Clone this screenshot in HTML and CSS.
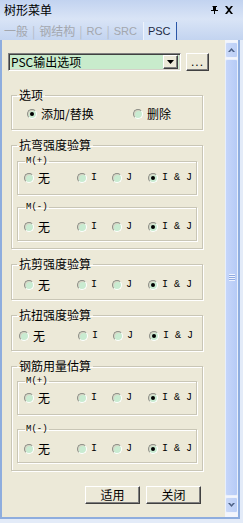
FILE: index.html
```html
<html lang="zh">
<head>
    <meta charset="UTF-8">
    <title>树形菜单</title>
    <link rel="stylesheet" href="styles.css">
</head>
<body>
<div class="window">
    <div class="titlebar">
        <span class="title">树形菜单</span>
        <div class="title-icons">
            <svg width="8" height="8" viewBox="0 0 8 8"><path d="M2 0h4v1h-1v3h2v1h-3v3h-1v-3h-3v-1h2v-3h-1z" fill="#000"/></svg>
            <svg width="8" height="8" viewBox="0 0 8 8"><path d="M0 0h2l2 2.5 2-2.5h2l-3 4 3 4h-2l-2-2.5-2 2.5h-2l3-4z" fill="#000"/></svg>
        </div>
    </div>

    <div class="tabs">
        <span class="tab">一般</span><span class="sep">|</span>
        <span class="tab">钢结构</span><span class="sep">|</span>
        <span class="tab latin">RC</span><span class="sep">|</span>
        <span class="tab latin">SRC</span>
        <span class="tab latin active">PSC</span>
    </div>

    <div class="frame">
        <div class="content">
            <div class="combo-row">
                <div class="combo">
                    <span>PSC输出选项</span>
                    <span class="drop"><svg width="7" height="4" viewBox="0 0 7 4"><path d="M0 0h7l-3.5 4z" fill="#000"/></svg></span>
                </div>
                <button class="btn more">...</button>
            </div>

            <fieldset class="group g-opts">
                <legend>选项</legend>
                <div class="opts opts-main">
                    <label class="opt"><span class="radio on"></span>添加/替换</label>
                    <label class="opt"><span class="radio"></span>删除</label>
                </div>
            </fieldset>

            <fieldset class="group g-outer">
                <legend>抗弯强度验算</legend>
                <fieldset class="sub sub-plus">
                    <legend class="mono-legend">M(+)</legend>
                    <div class="opts">
                        <label class="opt"><span class="radio"></span>无</label>
                        <label class="opt"><span class="radio"></span><span class="mono">I</span></label>
                        <label class="opt"><span class="radio"></span><span class="mono">J</span></label>
                        <label class="opt"><span class="radio on"></span><span class="mono">I &amp; J</span></label>
                    </div>
                </fieldset>
                <fieldset class="sub sub-minus">
                    <legend class="mono-legend">M(-)</legend>
                    <div class="opts">
                        <label class="opt"><span class="radio"></span>无</label>
                        <label class="opt"><span class="radio"></span><span class="mono">I</span></label>
                        <label class="opt"><span class="radio"></span><span class="mono">J</span></label>
                        <label class="opt"><span class="radio on"></span><span class="mono">I &amp; J</span></label>
                    </div>
                </fieldset>
            </fieldset>

            <fieldset class="group g-single">
                <legend>抗剪强度验算</legend>
                <div class="opts opts-shear">
                    <label class="opt"><span class="radio"></span>无</label>
                    <label class="opt"><span class="radio"></span><span class="mono">I</span></label>
                    <label class="opt"><span class="radio"></span><span class="mono">J</span></label>
                    <label class="opt"><span class="radio on"></span><span class="mono">I &amp; J</span></label>
                </div>
            </fieldset>

            <fieldset class="group g-single">
                <legend>抗扭强度验算</legend>
                <div class="opts opts-torsion">
                    <label class="opt"><span class="radio"></span>无</label>
                    <label class="opt"><span class="radio"></span><span class="mono">I</span></label>
                    <label class="opt"><span class="radio"></span><span class="mono">J</span></label>
                    <label class="opt"><span class="radio on"></span><span class="mono">I &amp; J</span></label>
                </div>
            </fieldset>

            <fieldset class="group g-outer g-rebar">
                <legend>钢筋用量估算</legend>
                <fieldset class="sub sub-plus">
                    <legend class="mono-legend">M(+)</legend>
                    <div class="opts">
                        <label class="opt"><span class="radio"></span>无</label>
                        <label class="opt"><span class="radio"></span><span class="mono">I</span></label>
                        <label class="opt"><span class="radio"></span><span class="mono">J</span></label>
                        <label class="opt"><span class="radio on"></span><span class="mono">I &amp; J</span></label>
                    </div>
                </fieldset>
                <fieldset class="sub sub-minus">
                    <legend class="mono-legend">M(-)</legend>
                    <div class="opts">
                        <label class="opt"><span class="radio"></span>无</label>
                        <label class="opt"><span class="radio"></span><span class="mono">I</span></label>
                        <label class="opt"><span class="radio"></span><span class="mono">J</span></label>
                        <label class="opt"><span class="radio on"></span><span class="mono">I &amp; J</span></label>
                    </div>
                </fieldset>
            </fieldset>

            <div class="actions">
                <button class="btn">适用</button>
                <button class="btn">关闭</button>
            </div>
        </div>

        <div class="scrollbar">
            <div class="sb-btn">
                <svg width="7" height="4" viewBox="0 0 7 4"><path d="M0 4l3.5-4 3.5 4h-2l-1.5-1.7-1.5 1.7z" fill="#4d6185"/></svg>
            </div>
            <div class="sb-thumb">
                <span class="grip"></span>
            </div>
            <div class="sb-btn">
                <svg width="7" height="4" viewBox="0 0 7 4"><path d="M0 0l3.5 4 3.5-4h-2l-1.5 1.7-1.5-1.7z" fill="#4d6185"/></svg>
            </div>
        </div>
    </div>
</div>
</body>
</html>
```

FILE: styles.css
```css
body {
    margin: 0;
    padding: 0;
    font-family: "Noto Sans CJK SC", sans-serif;
    font-size: 12px;
    color: #000;
    background: #e3ebf8;
}

.window {
    width: 243px;
    height: 523px;
    display: flex;
    flex-direction: column;
}

/* title bar */
.titlebar {
    height: 19px;
    display: flex;
    align-items: center;
    justify-content: space-between;
    padding: 0 10px 0 4px;
    background: linear-gradient(#c2d3f0, #d9e4f6);
}

.title {
    font-size: 12px;
    line-height: 14px;
}

.title-icons {
    display: flex;
    gap: 6px;
    align-items: center;
}

/* tabs */
.tabs {
    height: 21px;
    display: flex;
    align-items: flex-end;
    padding-left: 4px;
    background: linear-gradient(#d9e4f6, #c3d4f0);
    color: #a3a7ae;
    font-size: 12px;
}

.tabs .tab,
.tabs .sep {
    height: 18px;
    line-height: 18px;
}

.tabs .sep {
    margin: 0 4px;
    color: #b4bac4;
}

.tabs .latin {
    font-family: "Liberation Sans", sans-serif;
    font-size: 11px;
}

.tabs .active {
    margin-left: 6px;
    padding: 0 5px 0 4px;
    color: #1c2a44;
    background: #d6e4f8;
    border-left: 1px solid #eef3fc;
    border-right: 1px solid #2a56a8;
}

/* main frame */
.frame {
    flex: 1;
    display: flex;
    margin: 0 3px 4px 0;
    border: 2px solid #8eadde;
    border-top: 0;
    background: #ece9d8;
}

.content {
    flex: 1;
    padding: 13px 0 0 6px;
    box-sizing: border-box;
}

.combo-row {
    display: flex;
    gap: 5px;
    height: 18px;
}

.combo {
    width: 173px;
    box-sizing: border-box;
    display: flex;
    align-items: center;
    justify-content: space-between;
    background: #c8ebcc;
    border: 1px solid;
    border-color: #808080 #fff #fff #808080;
    box-shadow: inset 1px 1px #404040, inset -1px -1px #d4d0c8;
    padding: 0 2px;
}

.combo span:first-child {
    line-height: 14px;
}

.drop {
    width: 15px;
    height: 14px;
    box-sizing: border-box;
    display: flex;
    align-items: center;
    justify-content: center;
    background: #ece9d8;
    border: 1px solid;
    border-color: #fff #404040 #404040 #fff;
    box-shadow: inset -1px -1px #808080;
}

.btn {
    margin: 0;
    padding: 0;
    height: 18px;
    font-family: "Noto Sans CJK SC", sans-serif;
    font-size: 12px;
    line-height: 14px;
    color: #000;
    background: #ece9d8;
    border: 1px solid;
    border-color: #fff #404040 #404040 #fff;
    box-shadow: inset -1px -1px #808080;
}

.btn.more {
    width: 23px;
    font-family: "Liberation Sans", sans-serif;
    letter-spacing: 1px;
}

/* group boxes */
fieldset {
    margin: 0;
    min-width: 0;
    border: 1px solid #c9c6b6;
    box-shadow: inset 1px 1px #fff, 1px 1px #fff;
}

legend {
    padding: 0 2px;
    font-size: 12px;
    line-height: 14px;
}

.group {
    width: 192px;
    box-sizing: border-box;
    margin-left: 3px;
    margin-top: 8px;
    padding: 0 5px;
}

.g-opts {
    margin-top: 17px;
    padding: 4px 5px 7px;
}

.g-outer {
    padding: 2px 5px 7px;
}

.g-rebar {
    padding-top: 1px;
}

.g-single {
    padding: 6px 5px 6px;
}

.sub {
    padding: 2px 6px 8px;
}

.sub-minus {
    margin-top: 5px;
    padding: 5px 6px 5px;
}

.g-rebar .sub-minus {
    margin-top: 7px;
}

.mono-legend {
    font-family: "Liberation Mono", monospace;
    font-size: 9px;
    padding: 0 1px;
    margin-left: 1px;
}

/* radio rows */
.opts {
    display: grid;
    grid-template-columns: 53px 35px 36px auto;
    height: 16px;
    align-items: center;
    white-space: nowrap;
}

.opts-main {
    grid-template-columns: 106px auto;
    padding-left: 10px;
}

.opts-shear {
    padding-left: 7px;
}

.opts-torsion {
    grid-template-columns: 59px 35px 36px auto;
    padding-left: 2px;
}

.opt {
    display: flex;
    align-items: center;
    gap: 4px;
    line-height: 14px;
}

.mono {
    font-family: "Liberation Mono", monospace;
    font-size: 10px;
}

.radio {
    flex: none;
    width: 10px;
    height: 10px;
    box-sizing: border-box;
    border-radius: 50%;
    background: #c9ebd1;
    border: 1px solid;
    border-color: #8d8d86 #fff #fff #8d8d86;
    box-shadow: inset 1px 1px #d8d5c6;
    display: flex;
    align-items: center;
    justify-content: center;
}

.radio.on::after {
    content: "";
    width: 4px;
    height: 4px;
    border-radius: 50%;
    background: #000;
}

/* bottom buttons */
.actions {
    width: 192px;
    margin: 15px 0 0 3px;
    padding-right: 2px;
    box-sizing: border-box;
    display: flex;
    justify-content: flex-end;
    gap: 6px;
}

.actions .btn {
    width: 55px;
}

/* scrollbar */
.scrollbar {
    width: 13px;
    display: flex;
    flex-direction: column;
    padding: 2px 0 4px;
    background: #f3f5fb;
}

.sb-btn {
    height: 16px;
    box-sizing: border-box;
    display: flex;
    align-items: center;
    justify-content: center;
    background: linear-gradient(90deg, #cad9f9, #bccff6);
    border: 1px solid #eef3fd;
    border-radius: 2px;
}

.sb-thumb {
    flex: 1;
    margin: 1px 0;
    display: flex;
    align-items: center;
    justify-content: center;
    background: linear-gradient(90deg, #c6d6fa, #b6cbf6);
    border: 1px solid #e8effc;
    border-radius: 2px;
}

.grip {
    width: 6px;
    height: 7px;
    background: repeating-linear-gradient(#eef3fe 0 1px, #8faae0 1px 2px);
}
```
